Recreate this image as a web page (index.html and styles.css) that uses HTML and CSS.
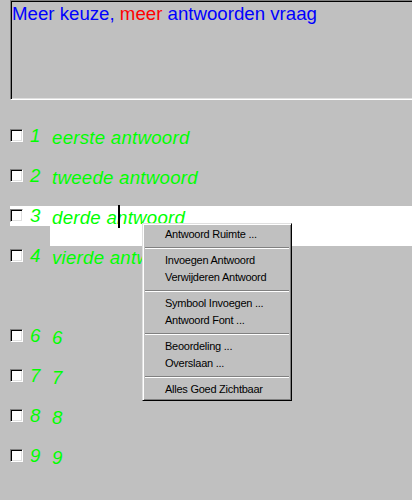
FILE: index.html
```html
<!DOCTYPE html>
<html>
<head>
<meta charset="utf-8">
<link rel="stylesheet" href="styles.css">
</head>
<body>
<div class="page">
  <div class="question"><span class="blue">Meer keuze, </span><span class="red">meer</span><span class="blue"> antwoorden vraag</span></div>
  <div class="answers">
    <div class="row"><div class="line"><span class="cb"></span><span class="num">1</span><span class="txt">eerste antwoord</span></div></div>
    <div class="row"><div class="line"><span class="cb"></span><span class="num">2</span><span class="txt">tweede antwoord</span></div></div>
    <div class="row active"><div class="line"><span class="cb"></span><span class="num">3</span><span class="txt">derde antwoord</span></div><div class="line2"></div><span class="caret"></span></div>
    <div class="row"><div class="line"><span class="cb"></span><span class="num">4</span><span class="txt">vierde antwoord</span></div></div>
    <div class="row"></div>
    <div class="row"><div class="line"><span class="cb"></span><span class="num">6</span><span class="txt">6</span></div></div>
    <div class="row"><div class="line"><span class="cb"></span><span class="num">7</span><span class="txt">7</span></div></div>
    <div class="row"><div class="line"><span class="cb"></span><span class="num">8</span><span class="txt">8</span></div></div>
    <div class="row"><div class="line"><span class="cb"></span><span class="num">9</span><span class="txt">9</span></div></div>
  </div>
  <div class="menu">
    <div class="item">Antwoord Ruimte ...</div>
    <div class="sep"></div>
    <div class="item">Invoegen Antwoord</div>
    <div class="item">Verwijderen Antwoord</div>
    <div class="sep"></div>
    <div class="item">Symbool Invoegen ...</div>
    <div class="item">Antwoord Font ...</div>
    <div class="sep"></div>
    <div class="item">Beoordeling ...</div>
    <div class="item">Overslaan ...</div>
    <div class="sep"></div>
    <div class="item">Alles Goed Zichtbaar</div>
  </div>
</div>
</body>
</html>
```
FILE: styles.css
```css
html, body {
  margin: 0;
  padding: 0;
  overflow: hidden;
  background: #c0c0c0;
}
.page {
  position: relative;
  width: 412px;
  height: 500px;
  overflow: hidden;
  background: #c0c0c0;
  font-family: "Liberation Sans", Arial, sans-serif;
}
.question {
  box-sizing: border-box;
  margin-left: 10px;
  width: 420px;
  height: 100px;
  border: 1px solid;
  border-color: #808080 #ffffff #ffffff #808080;
  box-shadow: inset 1px 1px 0 #000, inset -1px -1px 0 #dfdfdf;
  padding: 2px 2px 0 1px;
  font-size: 18.67px;
  line-height: 22px;
  white-space: nowrap;
}
.blue { color: #0000ff; }
.red { color: #ff0000; }
.answers {
  margin-top: 26px;
}
.row {
  position: relative;
  height: 40px;
}
.line {
  display: flex;
  align-items: flex-start;
  height: 20px;
  margin-left: 10px;
}
.line2 {
  height: 20px;
  margin-left: 50px;
}
.active .line, .active .line2 {
  background: #ffffff;
}
.cb {
  box-sizing: border-box;
  width: 13px;
  height: 13px;
  margin-top: 3px;
  background: #fff;
  border: 1px solid;
  border-color: #808080 #ffffff #ffffff #808080;
  box-shadow: inset 1px 1px 0 #000, inset -1px -1px 0 #dfdfdf;
  flex: none;
}
.num, .txt {
  color: #00ff00;
  font-style: italic;
  font-size: 18.67px;
  line-height: 20px;
  white-space: nowrap;
}
.num {
  width: 22px;
  margin-left: 7px;
  flex: none;
}
.txt {
  padding-top: 2px;
  letter-spacing: 0.25px;
}
.caret {
  position: absolute;
  left: 118px;
  top: -1px;
  width: 2px;
  height: 23px;
  background: #000;
}
.menu {
  position: absolute;
  left: 142px;
  top: 223px;
  box-sizing: border-box;
  width: 150px;
  height: 178px;
  background: #c0c0c0;
  border: 1px solid;
  border-color: #dfdfdf #000 #000 #dfdfdf;
  box-shadow: inset 1px 1px 0 #fff, inset -1px -1px 0 #808080;
  padding: 2px 2px;
  font-size: 11px;
  letter-spacing: -0.25px;
  color: #000;
}
.item {
  height: 17px;
  line-height: 17px;
  padding-left: 20px;
  white-space: nowrap;
}
.sep {
  margin: 4px 0 3px;
  border-top: 1px solid #808080;
  border-bottom: 1px solid #fff;
}
```
